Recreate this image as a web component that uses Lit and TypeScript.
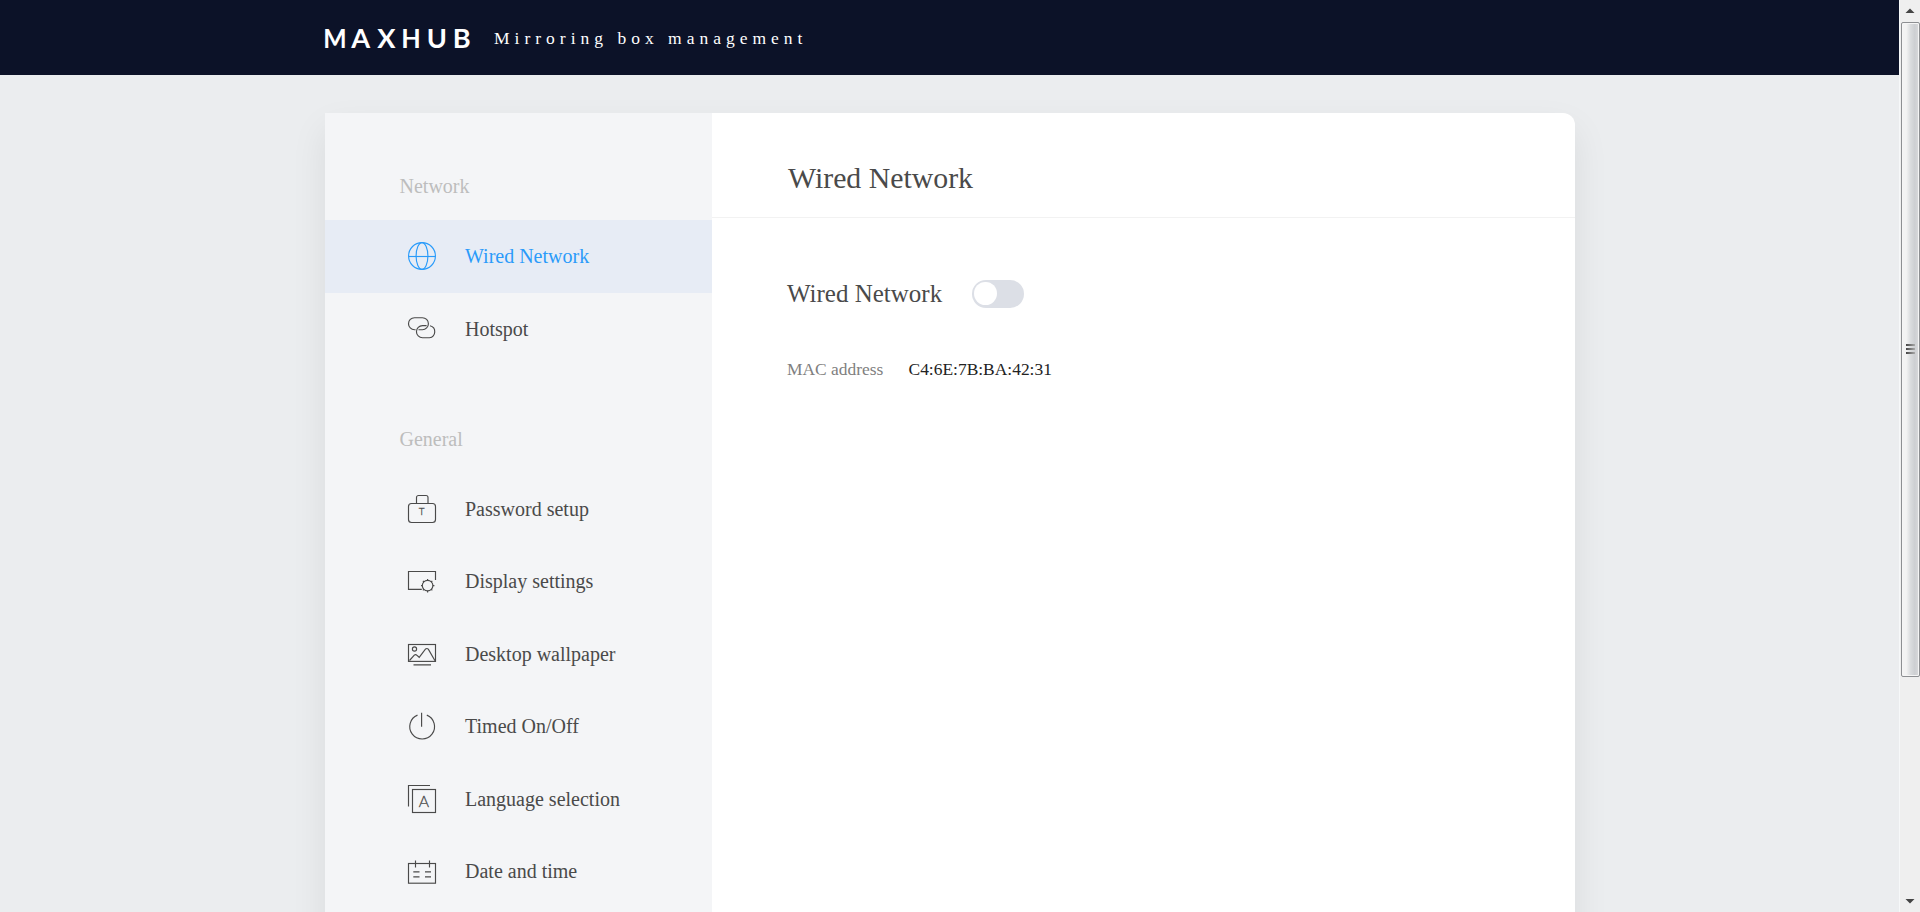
import { LitElement, html, css, svg } from "lit";
import { customElement, property, state } from "lit/decorators.js";
import { classMap } from "lit/directives/class-map.js";

const icons: Record<string, unknown> = {
  globe: svg`<circle cx="15" cy="15" r="13.4"/><ellipse cx="15" cy="15" rx="5.9" ry="13.4"/><path d="M1.5 15.5H28.5"/>`,
  link: svg`<path d="M11.5 15.7H15.4A6 6 0 0 0 15.4 3.7H7.5A6 6 0 0 0 7.5 15.7H8.6"/><path d="M23 11.7A6.1 6.1 0 0 1 22.4 23.7H15.5A6.05 6.05 0 0 1 15.5 11.6H19.6"/>`,
  lock: svg`<rect x="1.5" y="9.5" width="27" height="19" rx="3"/><path d="M9.5 9V3.5A2 2 0 0 1 11.5 1.5H19A2 2 0 0 1 21 3.5V9"/><text class="glyph" x="14.6" y="21.2" font-size="10">T</text>`,
  display: svg`<path d="M28.5 14V5.5H1.5V23.3H14.8"/><circle cx="20.6" cy="19.6" r="5.3"/><path d="M20.6 12.9v1.6M20.6 24.7v1.7M14 19.6h1.5M25.8 19.6h1.6M15.9 14.9l1.1 1.1M24.2 23.2l1.1 1.1M15.9 24.3l1.1-1.1M24.2 16l1.1-1.1"/>`,
  picture: svg`<rect x="1.5" y="5.5" width="27" height="16.9"/><circle cx="7.5" cy="10" r="2.1"/><path d="M2.5 21.5L7.3 16.2Q8.6 15 10 16.3L12.2 18.3L18.6 10Q20 8.9 21.3 10.2L28 21.8M6.5 25.8H24"/>`,
  power: svg`<path d="M10.5 4.1A12.4 12.4 0 1 0 19.8 4.1M14.6 1.8V15.8"/>`,
  language: svg`<rect x="5.5" y="5.5" width="23" height="23"/><path d="M1.5 22.5V1.5H23"/><text class="glyph" x="17" y="22.7" font-size="15.7">A</text>`,
  calendar: svg`<rect x="1.5" y="7.5" width="27" height="19.7"/><path d="M8.5 4.5V11.5M22.5 4.5V11.5M6.3 15.9H12.5M18 15.9H24M6.3 20.9H12.5M18 20.9H24"/>`,
};

@customElement("nav-item")
class NavItem extends LitElement {
  @property() icon = "";
  @property() label = "";
  @property({ type: Boolean }) active = false;

  static styles = css`
    :host { display: block; flex: none; height: 72.5px; }
    .row {
      box-sizing: border-box; height: 73px; display: flex; align-items: center;
      padding: 0 0 1px 82px; color: #4a4a4a; font-size: 20px; cursor: pointer;
    }
    .row.active { background: #e7ecf5; color: #2a9bfa; }
    svg {
      width: 30px; height: 30px; flex: none; margin-right: 28px;
      fill: none; stroke: currentColor; stroke-width: 1.15;
    }
    .glyph {
      font-family: Lato, "Open Sans", sans-serif; font-weight: 300;
      fill: currentColor; stroke: currentColor; stroke-width: 0.3; text-anchor: middle;
    }
    .label { line-height: 24px; white-space: nowrap; }
  `;

  render() {
    return html`<div class=${classMap({ row: true, active: this.active })}>
      <svg viewBox="0 0 30 30">${icons[this.icon]}</svg>
      <span class="label">${this.label}</span>
    </div>`;
  }
}

@customElement("app-root")
class AppRoot extends LitElement {
  @state() selected = "Wired Network";

  groups = [
    { title: "Network", items: [["globe", "Wired Network"], ["link", "Hotspot"]] },
    {
      title: "General",
      items: [
        ["lock", "Password setup"], ["display", "Display settings"],
        ["picture", "Desktop wallpaper"], ["power", "Timed On/Off"],
        ["language", "Language selection"], ["calendar", "Date and time"],
      ],
    },
  ];

  static styles = css`
    :host {
      display: flex; height: 912px; overflow: hidden; background: #ebedef;
      font-family: "Liberation Serif", "Times New Roman", serif;
    }
    .page { flex: 1; min-width: 0; height: 912px; overflow: hidden; }
    header { background: #0c1228; height: 75px; }
    .bar, .card { width: 1250px; margin-left: 325px; }
    .bar { display: flex; align-items: center; height: 75px; }
    .logo { width: 156px; height: 30px; flex: none; margin: 0 18px 0 -5px; overflow: visible; }
    .logo text { font: 700 27.2px Lato, sans-serif; fill: #fff; }
    .product { color: #fff; font-size: 17.5px; letter-spacing: 5px; line-height: 22px; margin-top: 1px; }
    .card {
      display: flex; height: 1200px; margin-top: 38px; background: #fff;
      border-radius: 0 12px 12px 0; box-shadow: 0 16px 36px rgba(0, 0, 0, 0.08);
    }
    aside { width: 387px; background: #f4f5f7; padding-top: 37px; box-sizing: border-box; }
    .group { padding-bottom: 37.7px; }
    .group-title { height: 70px; line-height: 73px; padding-left: 74.5px; font-size: 20px; color: #bdbdbd; }
    main { flex: 1; }
    h1 {
      margin: 0; height: 104px; line-height: 130px; padding-left: 76px;
      font-size: 29.8px; font-weight: 400; color: #4a4a4a; border-bottom: 1px solid #f2f2f2;
    }
    .setting { display: flex; align-items: center; padding: 61px 0 0 75px; height: 30px; }
    .name { width: 185px; font-size: 25px; line-height: 30px; color: #4a4a4a; }
    .switch {
      width: 52px; height: 28px; border-radius: 14px; background: #dcdfe6;
      box-sizing: border-box; padding: 2px; border: 0; display: flex;
    }
    .knob { width: 22.5px; height: 23px; border-radius: 50%; background: #fff; }
    .fact { display: flex; padding: 49px 0 0 75px; font-size: 17.45px; line-height: 22px; }
    .key { width: 121.5px; color: #808080; }
    .value { color: #222; }
    .scroll {
      flex: none; width: 21px; height: 912px; box-sizing: border-box; background: #efefef;
      border-left: 1px solid #f6f8f9; display: flex; flex-direction: column; align-items: center;
    }
    .arrow { height: 22px; width: 19px; display: block; }
    .thumb {
      width: 19px; height: 655px; box-sizing: border-box; border: 1px solid #8d8f92;
      border-radius: 2px; box-shadow: inset 0 0 0 1px #f5f5f5; padding-bottom: 2px;
      background: linear-gradient(90deg, #f3f3f3 0 25%, #dadcde 50%, #cdcfd2 75%, #d9dadc);
      display: flex; flex-direction: column; align-items: center; justify-content: center; gap: 2px;
    }
    .grip { width: 9px; height: 2px; background: linear-gradient(90deg, #444, #aaa); }
    .track { flex: 1; }
  `;

  render() {
    return html`
      <div class="page">
        <header>
          <div class="bar">
            <svg class="logo" viewBox="0 0 156 30">
              <text y="25"><tspan x="3.2" textLength="23.4" lengthAdjust="spacingAndGlyphs">M</tspan><tspan x="31.3 57.2">AX</tspan><tspan x="81.2" textLength="19.5" lengthAdjust="spacingAndGlyphs">H</tspan><tspan x="106.8 132.7">UB</tspan></text>
            </svg>
            <span class="product">Mirroring box management</span>
          </div>
        </header>
        <div class="card">
          <aside>
            ${this.groups.map((g) => html`<div class="group">
              <div class="group-title">${g.title}</div>
              ${g.items.map(([icon, label]) => html`<nav-item
                .icon=${icon} .label=${label} .active=${label === this.selected}
                @click=${() => (this.selected = label)}></nav-item>`)}
            </div>`)}
          </aside>
          <main>
            <h1>${this.selected}</h1>
            <div class="setting">
              <span class="name">Wired Network</span>
              <button class="switch" aria-label="Wired Network"><span class="knob"></span></button>
            </div>
            <div class="fact"><span class="key">MAC address</span><span class="value">C4:6E:7B:BA:42:31</span></div>
          </main>
        </div>
      </div>
      <div class="scroll">
        <svg class="arrow" viewBox="0 0 19 22"><path d="M4.5 13L9 8.5L13.5 13Z" fill="#444"/></svg>
        <div class="thumb"><i class="grip"></i><i class="grip"></i><i class="grip"></i></div>
        <div class="track"></div>
        <svg class="arrow" viewBox="0 0 19 22"><path d="M4.5 9L9 13.5L13.5 9Z" fill="#444"/></svg>
      </div>
    `;
  }
}
